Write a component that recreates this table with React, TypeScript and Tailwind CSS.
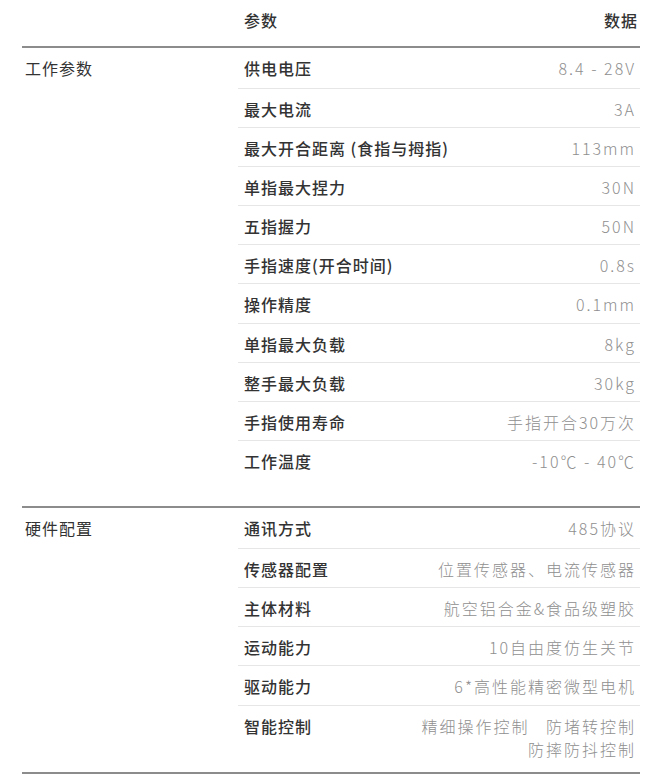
import * as React from 'react';

type Row = { name: string; value: React.ReactNode };

const WORK: Row[] = [
  { name: '供电电压', value: '8.4 - 28V' },
  { name: '最大电流', value: '3A' },
  { name: '最大开合距离 (食指与拇指)', value: '113mm' },
  { name: '单指最大捏力', value: '30N' },
  { name: '五指握力', value: '50N' },
  { name: '手指速度(开合时间)', value: '0.8s' },
  { name: '操作精度', value: '0.1mm' },
  { name: '单指最大负载', value: '8kg' },
  { name: '整手最大负载', value: '30kg' },
  { name: '手指使用寿命', value: '手指开合30万次' },
  { name: '工作温度', value: '-10℃ - 40℃' },
];

const HARDWARE: Row[] = [
  { name: '通讯方式', value: '485协议' },
  { name: '传感器配置', value: '位置传感器、电流传感器' },
  { name: '主体材料', value: '航空铝合金&食品级塑胶' },
  { name: '运动能力', value: '10自由度仿生关节' },
  { name: '驱动能力', value: '6*高性能精密微型电机' },
  {
    name: '智能控制',
    value: (
      <>
        精细操作控制&nbsp;&nbsp;&nbsp;防堵转控制
        <br />
        防摔防抖控制
      </>
    ),
  },
];

function Section({ title, rows, last }: { title: string; rows: Row[]; last?: boolean }) {
  return (
    <div className={`flex border-t-2 border-[#8c8c8c] ${last ? 'border-b-2' : ''}`}>
      <div className="w-[216px] shrink-0 pl-[3px] pt-[9px] text-[16px] leading-[23px] tracking-[1px] text-[#333]">
        {title}
      </div>
      <div className="flex-1">
        {rows.map((r, i) => {
          const isLast = i === rows.length - 1;
          const pad = i === 0 ? 'pt-[8.5px] pb-[8px]' : isLast && last ? 'pt-[9px] pb-[11px]' : 'pt-[9px] pb-[6.2px]';
          return (
            <div
              key={r.name}
              className={`flex items-start justify-between pl-[6px] pr-[4px] text-[16px] leading-[23px] ${pad} ${
                isLast ? '' : 'border-b border-[#e6e6e6]'
              }`}
            >
              <span className="font-medium tracking-[1px] text-[#333]">{r.name}</span>
              <span className="text-right font-light tracking-[2px] text-[#8f8f8f]">{r.value}</span>
            </div>
          );
        })}
      </div>
    </div>
  );
}

export default function App() {
  return (
    <div
      className="min-h-[783px] bg-white pl-[22px] pr-[13px]"
      style={{ fontFamily: '"Noto Sans CJK SC", "Noto Sans", sans-serif' }}
    >
      <div className="flex pt-[9px] pb-[14px] text-[16px] leading-[23px] font-medium tracking-[1px] text-[#333]">
        <div className="w-[216px] shrink-0" />
        <div className="flex flex-1 justify-between pl-[6px] pr-[2px]">
          <span>参数</span>
          <span>数据</span>
        </div>
      </div>
      <Section title="工作参数" rows={WORK} />
      <div className="h-[27px]" />
      <Section title="硬件配置" rows={HARDWARE} last />
    </div>
  );
}
